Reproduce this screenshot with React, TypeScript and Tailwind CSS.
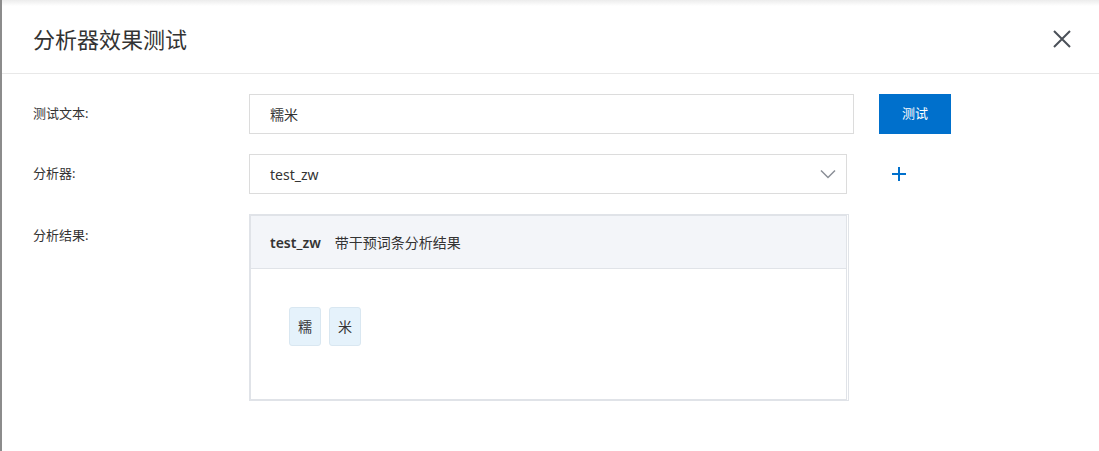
import React from 'react';

const font = { fontFamily: '"Noto Sans", "Noto Sans CJK SC", sans-serif' };

const tokens = ['糯', '米'];

function CloseIcon() {
  return (
    <svg width="20" height="20" viewBox="0 0 20 20" fill="none" stroke="#4a5058" strokeWidth="2">
      <path d="M2 2 L18 18 M18 2 L2 18" />
    </svg>
  );
}

function Chevron() {
  return (
    <svg width="16" height="10" viewBox="0 0 16 10" fill="none" stroke="#8a8f96" strokeWidth="1.5">
      <path d="M1 1.5 L8 8.5 L15 1.5" />
    </svg>
  );
}

function Plus() {
  return (
    <svg width="14" height="14" viewBox="0 0 14 14" fill="none" stroke="#0070cc" strokeWidth="2">
      <path d="M7 0 V14 M0 7 H14" />
    </svg>
  );
}

export default function App() {
  return (
    <div className="w-[1099px] h-[451px] bg-white relative overflow-hidden text-[#333]" style={font}>
      {/* dialog edge shading */}
      <div className="absolute top-0 left-0 right-0 h-[6px] bg-gradient-to-b from-[#ececec] to-white pointer-events-none" />
      <div className="absolute top-0 left-0 bottom-0 w-[2px] bg-[#8c8c8c]" />

      <div className="flex items-center justify-between h-[74px] pl-[33px] pr-[27px] border-b border-[#e8e8e8]">
        <h1 className="text-[22px] leading-none font-normal text-[#333] pt-[5px]">分析器效果测试</h1>
        <div className="pt-[5px]"><CloseIcon /></div>
      </div>

      <div className="pl-[33px] pt-[20px] flex flex-col gap-[20px]">
        <div className="flex items-center">
          <div className="w-[216px] text-[13px]">测试文本:</div>
          <div className="w-[605px] h-[40px] border border-[#dcdcdc] flex items-center px-[20px] text-[14px]">糯米</div>
          <button className="ml-[25px] w-[72px] h-[40px] bg-[#0070cc] text-white text-[13px]">测试</button>
        </div>

        <div className="flex items-center">
          <div className="w-[216px] text-[13px]">分析器:</div>
          <div className="w-[598px] h-[40px] border border-[#dcdcdc] flex items-center justify-between pl-[20px] pr-[10px] text-[14px]">
            <span>test_zw</span>
            <Chevron />
          </div>
          <div className="ml-[45px]"><Plus /></div>
        </div>

        <div className="flex items-start">
          <div className="w-[216px] text-[13px] pt-[12px]">分析结果:</div>
          <div className="w-[600px] h-[187px] border border-[#e0e3e8]">
            <div className="h-full border border-[#e0e3e8] mr-px flex flex-col">
              <div className="h-[53px] bg-[#f3f5f9] border-b border-[#e0e3e8] flex items-center pl-[19px] text-[14px]">
                <span className="font-semibold">test_zw</span>
                <span className="ml-[14px]">带干预词条分析结果</span>
              </div>
              <div className="flex gap-[8px] pl-[38px] pt-[38px]">
                {tokens.map((t) => (
                  <div key={t} className="w-[32px] h-[39px] rounded-[3px] bg-[#e5f2fb] border border-[#d9e7f1] flex items-center justify-center text-[14px]">
                    {t}
                  </div>
                ))}
              </div>
            </div>
          </div>
        </div>
      </div>
    </div>
  );
}
